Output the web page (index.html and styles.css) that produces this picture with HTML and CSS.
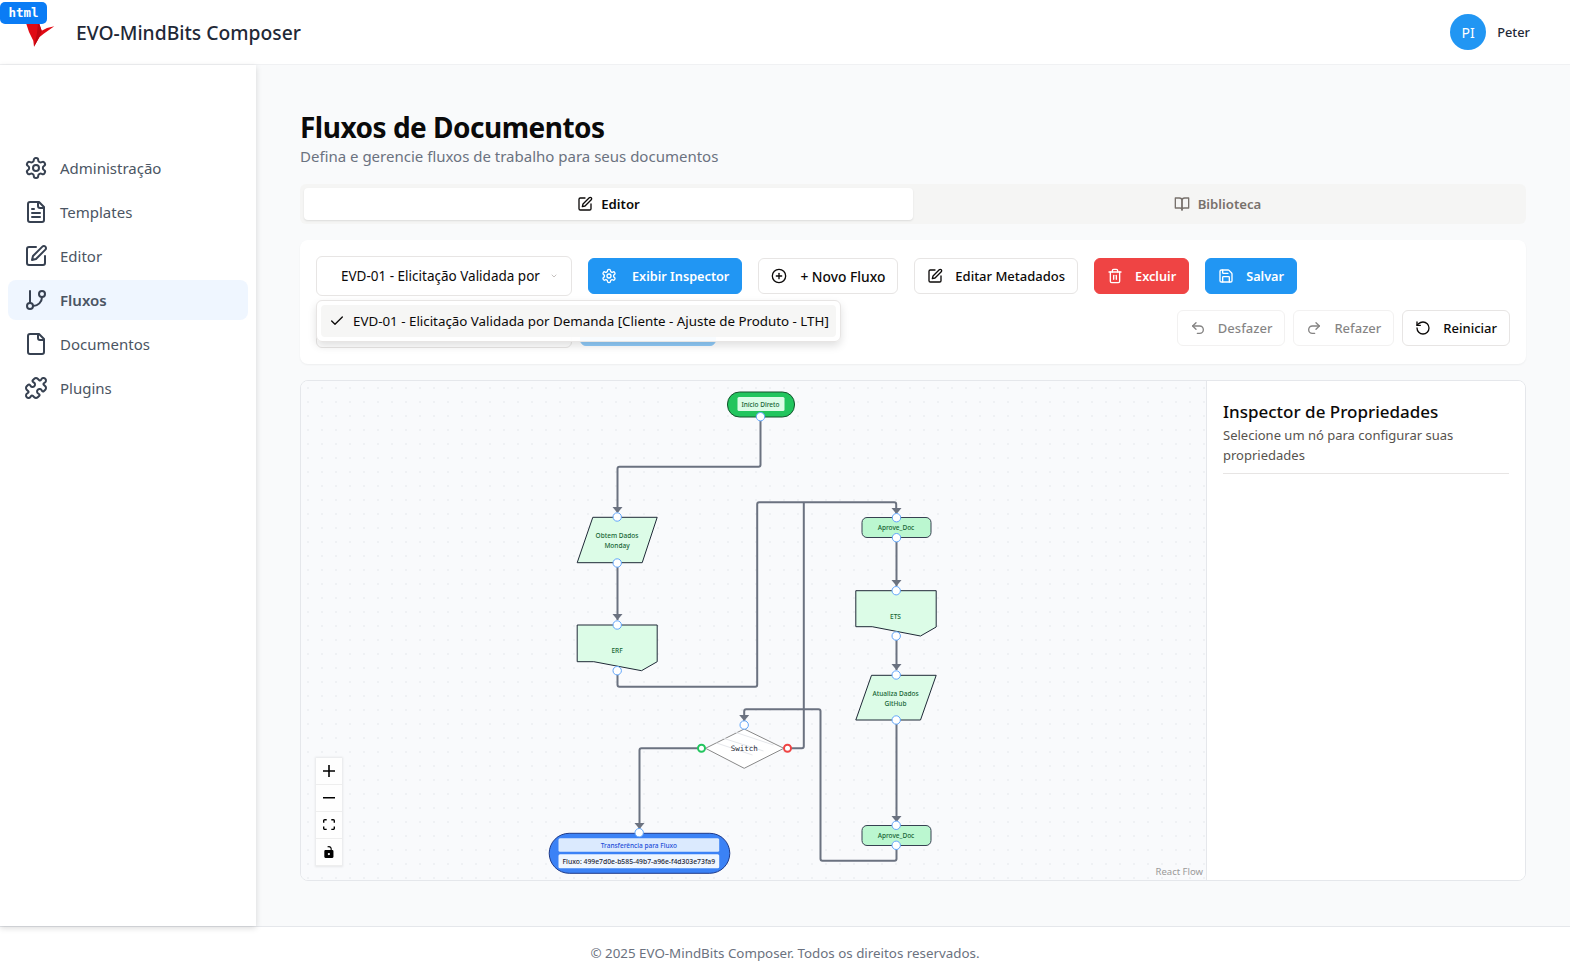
FILE: index.html
```html
<!DOCTYPE html>
<html lang="pt-BR">
<head>
    <meta charset="UTF-8">
    <title>EVO-MindBits Composer</title>
    <link rel="stylesheet" href="styles.css">
</head>
<body>
    <!-- icones -->
    <svg class="sprite">
        <symbol id="i-settings" viewBox="0 0 24 24"><path d="M12.22 2h-.44a2 2 0 0 0-2 2v.18a2 2 0 0 1-1 1.73l-.43.25a2 2 0 0 1-2 0l-.15-.08a2 2 0 0 0-2.73.73l-.22.38a2 2 0 0 0 .73 2.73l.15.1a2 2 0 0 1 1 1.72v.51a2 2 0 0 1-1 1.74l-.15.09a2 2 0 0 0-.73 2.73l.22.38a2 2 0 0 0 2.73.73l.15-.08a2 2 0 0 1 2 0l.43.25a2 2 0 0 1 1 1.73V20a2 2 0 0 0 2 2h.44a2 2 0 0 0 2-2v-.18a2 2 0 0 1 1-1.73l.43-.25a2 2 0 0 1 2 0l.15.08a2 2 0 0 0 2.73-.73l.22-.39a2 2 0 0 0-.73-2.73l-.15-.08a2 2 0 0 1-1-1.74v-.5a2 2 0 0 1 1-1.74l.15-.09a2 2 0 0 0 .73-2.73l-.22-.38a2 2 0 0 0-2.73-.73l-.15.08a2 2 0 0 1-2 0l-.43-.25a2 2 0 0 1-1-1.73V4a2 2 0 0 0-2-2z"/><circle cx="12" cy="12" r="3"/></symbol>
        <symbol id="i-file-text" viewBox="0 0 24 24"><path d="M15 2H6a2 2 0 0 0-2 2v16a2 2 0 0 0 2 2h12a2 2 0 0 0 2-2V7Z"/><path d="M14 2v4a2 2 0 0 0 2 2h4"/><path d="M10 9H8"/><path d="M16 13H8"/><path d="M16 17H8"/></symbol>
        <symbol id="i-pen" viewBox="0 0 24 24"><path d="M12 3H5a2 2 0 0 0-2 2v14a2 2 0 0 0 2 2h14a2 2 0 0 0 2-2v-7"/><path d="M18.375 2.625a2.121 2.121 0 1 1 3 3L12 15l-4 1 1-4Z"/></symbol>
        <symbol id="i-branch" viewBox="0 0 24 24"><path d="M6 3v12"/><circle cx="18" cy="6" r="3"/><circle cx="6" cy="18" r="3"/><path d="M18 9a9 9 0 0 1-9 9"/></symbol>
        <symbol id="i-file" viewBox="0 0 24 24"><path d="M15 2H6a2 2 0 0 0-2 2v16a2 2 0 0 0 2 2h12a2 2 0 0 0 2-2V7Z"/><path d="M14 2v4a2 2 0 0 0 2 2h4"/></symbol>
        <symbol id="i-puzzle" viewBox="0 0 24 24"><path d="M19.439 7.85c-.049.322.059.648.289.878l1.568 1.568c.47.47.706 1.087.706 1.704s-.235 1.233-.706 1.704l-1.611 1.611a.98.98 0 0 1-.837.276c-.47-.07-.802-.48-.968-.925a2.501 2.501 0 1 0-3.214 3.214c.446.166.855.497.925.968a.979.979 0 0 1-.276.837l-1.61 1.61a2.404 2.404 0 0 1-1.705.707 2.402 2.402 0 0 1-1.704-.706l-1.568-1.568a1.026 1.026 0 0 0-.877-.29c-.493.074-.84.504-1.02.968a2.5 2.5 0 1 1-3.237-3.237c.464-.18.894-.527.967-1.02a1.026 1.026 0 0 0-.289-.877l-1.568-1.568A2.402 2.402 0 0 1 1.998 12c0-.617.236-1.234.706-1.704L4.23 8.77c.24-.24.581-.353.917-.303.515.077.877.528 1.073 1.01a2.5 2.5 0 1 0 3.259-3.259c-.482-.196-.933-.558-1.01-1.073-.05-.336.062-.676.303-.917l1.525-1.525A2.402 2.402 0 0 1 12 1.998c.617 0 1.234.236 1.704.706l1.568 1.568c.23.23.556.338.877.29.493-.074.84-.504 1.02-.968a2.5 2.5 0 1 1 3.237 3.237c-.464.18-.894.527-.967 1.02Z"/></symbol>
        <symbol id="i-book" viewBox="0 0 24 24"><path d="M2 3h6a4 4 0 0 1 4 4v14a3 3 0 0 0-3-3H2z"/><path d="M22 3h-6a4 4 0 0 0-4 4v14a3 3 0 0 1 3-3h7z"/></symbol>
        <symbol id="i-plus" viewBox="0 0 24 24"><circle cx="12" cy="12" r="10"/><path d="M8 12h8"/><path d="M12 8v8"/></symbol>
        <symbol id="i-trash" viewBox="0 0 24 24"><path d="M3 6h18"/><path d="M19 6v14c0 1-1 2-2 2H7c-1 0-2-1-2-2V6"/><path d="M8 6V4c0-1 1-2 2-2h4c1 0 2 1 2 2v2"/><path d="M10 11v6"/><path d="M14 11v6"/></symbol>
        <symbol id="i-save" viewBox="0 0 24 24"><path d="M15.2 3a2 2 0 0 1 1.4.6l3.8 3.8a2 2 0 0 1 .6 1.4V19a2 2 0 0 1-2 2H5a2 2 0 0 1-2-2V5a2 2 0 0 1 2-2z"/><path d="M17 21v-7a1 1 0 0 0-1-1H8a1 1 0 0 0-1 1v7"/><path d="M7 3v4a1 1 0 0 0 1 1h7"/></symbol>
        <symbol id="i-undo" viewBox="0 0 24 24"><path d="M9 14 4 9l5-5"/><path d="M4 9h10.5a5.5 5.5 0 0 1 5.5 5.5a5.5 5.5 0 0 1-5.5 5.5H11"/></symbol>
        <symbol id="i-redo" viewBox="0 0 24 24"><path d="m15 14 5-5-5-5"/><path d="M20 9H9.5A5.5 5.5 0 0 0 4 14.5A5.5 5.5 0 0 0 9.5 20H13"/></symbol>
        <symbol id="i-reset" viewBox="0 0 24 24"><path d="M3 12a9 9 0 1 0 9-9 9.75 9.75 0 0 0-6.74 2.74L3 8"/><path d="M3 3v5h5"/></symbol>
        <symbol id="i-check" viewBox="0 0 24 24"><path d="M20 6 9 17l-5-5"/></symbol>
        <symbol id="i-chevron" viewBox="0 0 24 24"><path d="m6 9 6 6 6-6"/></symbol>
    </svg>

    <span class="lang-badge">html</span>

    <header class="topbar">
        <div class="brand">
            <svg class="brand-logo" viewBox="0 0 32 30">
                <polygon points="2,4 5,13 9.300,21.700 10,27.700 15.300,18.300 20,14.500 30.300,7.300 23,9 17.700,11.700 14.300,2" fill="#e00a14"/>
                <polygon points="14.300,2 17.700,11.700 15.300,18.300 10,27.700 13,14" fill="#c00610"/>
            </svg>
            <span class="brand-name">EVO-MindBits Composer</span>
        </div>
        <div class="user">
            <span class="avatar">PI</span>
            <span class="user-name">Peter</span>
        </div>
    </header>

    <div class="page">
        <nav class="sidebar">
            <a class="nav-item"><svg class="icon"><use href="#i-settings"/></svg>Administração</a>
            <a class="nav-item"><svg class="icon"><use href="#i-file-text"/></svg>Templates</a>
            <a class="nav-item"><svg class="icon"><use href="#i-pen"/></svg>Editor</a>
            <a class="nav-item active"><svg class="icon"><use href="#i-branch"/></svg>Fluxos</a>
            <a class="nav-item"><svg class="icon"><use href="#i-file"/></svg>Documentos</a>
            <a class="nav-item"><svg class="icon"><use href="#i-puzzle"/></svg>Plugins</a>
        </nav>

        <main class="content">
            <h1 class="title">Fluxos de Documentos</h1>
            <p class="subtitle">Defina e gerencie fluxos de trabalho para seus documentos</p>

            <div class="tabs">
                <div class="tab active"><svg class="icon-sm"><use href="#i-pen"/></svg>Editor</div>
                <div class="tab"><svg class="icon-sm"><use href="#i-book"/></svg>Biblioteca</div>
            </div>

            <section class="toolbar">
                <div class="toolbar-row">
                    <div class="select">
                        <span class="select-text">EVD-01 - Elicitação Validada por</span>
                        <svg class="chevron"><use href="#i-chevron"/></svg>
                    </div>
                    <button class="btn btn-blue btn-wide"><svg class="icon-sm"><use href="#i-settings"/></svg>Exibir Inspector</button>
                    <button class="btn btn-new"><svg class="icon-sm"><use href="#i-plus"/></svg>+ Novo Fluxo</button>
                    <button class="btn"><svg class="icon-sm"><use href="#i-pen"/></svg>Editar Metadados</button>
                    <button class="btn btn-red"><svg class="icon-sm"><use href="#i-trash"/></svg>Excluir</button>
                    <button class="btn btn-blue"><svg class="icon-sm"><use href="#i-save"/></svg>Salvar</button>
                </div>
                <div class="toolbar-row row-second">
                    <div class="select select-muted">
                        <span class="select-text">Selecione um nó</span>
                    </div>
                    <button class="btn btn-blue btn-off btn-link">Criar Conexão</button>
                    <div class="history">
                        <button class="btn btn-off"><svg class="icon-sm"><use href="#i-undo"/></svg>Desfazer</button>
                        <button class="btn btn-off"><svg class="icon-sm"><use href="#i-redo"/></svg>Refazer</button>
                        <button class="btn"><svg class="icon-sm"><use href="#i-reset"/></svg>Reiniciar</button>
                    </div>
                </div>
                <!-- lista aberta do select -->
                <div class="dropdown">
                    <div class="dropdown-item"><svg class="icon-sm"><use href="#i-check"/></svg>EVD-01 - Elicitação Validada por Demanda [Cliente - Ajuste de Produto - LTH]</div>
                </div>
            </section>

            <section class="builder">
                <div class="flow">
                    <svg class="flow-graph" viewBox="300.500 381 905 499">
                        <g class="edges">
                            <path d="M760 417V464.700q0 2 -2 2H619q-2 0 -2 2V512"/>
                            <path d="M617 563V620"/>
                            <path d="M617 671V684.700q0 2 2 2H754.700q2 0 2 -2V504.300q0 -2 2 -2H893.700q2 0 2 2V513"/>
                            <path d="M787 748.300H801.300q2 0 2 -2V502.300"/>
                            <path d="M896 538V586"/>
                            <path d="M896 636V670"/>
                            <path d="M896 720V822"/>
                            <path d="M896 845V858.700q0 2 -2 2H822q-2 0 -2 -2V711.300q0 -2 -2 -2H745.700q-2 0 -2 2V721"/>
                            <path d="M701 748.300H641q-2 0 -2 2V829"/>
                        </g>
                        <g class="arrows">
                            <polygon points="612,507 622,507 617,513"/>
                            <polygon points="612,614 622,614 617,620"/>
                            <polygon points="891,508 901,508 896,514"/>
                            <polygon points="891,580 901,580 896,586"/>
                            <polygon points="891,664 901,664 896,670"/>
                            <polygon points="891,816 901,816 896,822"/>
                            <polygon points="738.700,715 748.700,715 743.700,721"/>
                            <polygon points="634,823 644,823 639,829"/>
                        </g>

                        <rect class="node-start" x="727" y="392" width="67" height="25" rx="12"/>
                        <rect x="737" y="397" width="47" height="14" rx="1.500" fill="#dcfce7"/>
                        <text class="label-green" x="760" y="404.500">Início Direto</text>

                        <polygon class="node-doc" points="592.300,517.300 656.700,517.300 641.700,562.700 576.700,562.700"/>
                        <text class="label-green" x="616.500" y="535.500">Obtem Dados</text>
                        <text class="label-green" x="616.500" y="545.500">Monday</text>

                        <path class="node-doc" d="M576.700 625H656.700V661.700L641 670.700 593.300 661.700H576.700Z"/>
                        <text class="label-green" x="616.500" y="650">ERF</text>

                        <rect class="node-step" x="861.500" y="517.500" width="69" height="20" rx="5"/>
                        <text class="label-green" x="895.500" y="527">Aprove_Doc</text>

                        <path class="node-doc" d="M855.300 590.700H935.700V627L920 636 871.700 626.700H855.300Z"/>
                        <text class="label-green" x="895" y="616">ETS</text>

                        <polygon class="node-doc" points="871,675.300 935.700,675.300 920,720 855.300,720"/>
                        <text class="label-green" x="895" y="693.500">Atualiza Dados</text>
                        <text class="label-green" x="895" y="703.500">GitHub</text>

                        <rect class="node-step" x="861.500" y="825.500" width="69" height="20" rx="5"/>
                        <text class="label-green" x="895.500" y="835">Aprove_Doc</text>

                        <polygon class="node-switch" points="743.700,729 783.300,748.300 743.700,768.300 705,748.300"/>
                        <g class="switch-lines">
                            <path d="M722 738L763 751M716 743L752 755M734 732L773 745"/>
                        </g>
                        <text class="label-mono" x="743.700" y="748.500">Switch</text>

                        <rect class="node-end" x="548.700" y="833.300" width="180.600" height="40" rx="20"/>
                        <rect x="558" y="838.300" width="160.700" height="13.400" rx="1.500" fill="#dbeafe"/>
                        <text class="label-blue" x="638.300" y="845.200">Transferência para Fluxo</text>
                        <rect x="558" y="854.300" width="160.700" height="14" rx="1.500" fill="#eff6ff"/>
                        <text class="label-dark" x="638.300" y="861.400">Fluxo: 499e7d0e-b585-49b7-a96e-f4d303e73fa9</text>

                        <g class="handles">
                            <circle cx="760" cy="416.700" r="4.200"/>
                            <circle cx="616.700" cy="517" r="4.200"/>
                            <circle cx="616.700" cy="563" r="4.200"/>
                            <circle cx="616.700" cy="625" r="4.200"/>
                            <circle cx="616.700" cy="670.700" r="4.200"/>
                            <circle cx="896" cy="517.700" r="4.200"/>
                            <circle cx="896" cy="537.700" r="4.200"/>
                            <circle cx="895.700" cy="590.700" r="4.200"/>
                            <circle cx="895.700" cy="636" r="4.200"/>
                            <circle cx="895.700" cy="675" r="4.200"/>
                            <circle cx="895.700" cy="720" r="4.200"/>
                            <circle cx="895.700" cy="825.300" r="4.200"/>
                            <circle cx="895.700" cy="845.300" r="4.200"/>
                            <circle cx="743.700" cy="725" r="4.200"/>
                            <circle cx="638.700" cy="832.700" r="4.200"/>
                        </g>
                        <circle class="handle-yes" cx="701" cy="748.300" r="3.500"/>
                        <circle class="handle-no" cx="787" cy="748.300" r="3.500"/>
                    </svg>

                    <div class="flow-controls">
                        <button class="flow-btn"><svg viewBox="0 0 32 32"><path d="M32 18.133H18.133V32h-4.266V18.133H0v-4.266h13.867V0h4.266v13.867H32z"/></svg></button>
                        <button class="flow-btn"><svg viewBox="0 0 32 5"><path d="M0 0h32v4.200H0z"/></svg></button>
                        <button class="flow-btn"><svg viewBox="0 0 32 30"><path d="M3.692 4.630c0-.530.400-.938.939-.938h5.215V0H4.708C2.130 0 0 2.054 0 4.630v5.216h3.692V4.631zM27.354 0h-5.200v3.692h5.170c.530 0 .984.400.984.939v5.215H32V4.631A4.624 4.624 0 0027.354 0zm.954 24.830c0 .532-.400.940-.939.940h-5.215v3.768h5.215c2.577 0 4.631-2.130 4.631-4.707v-5.139h-3.692v5.139zm-23.677.940c-.531 0-.939-.400-.939-.940v-5.138H0v5.139c0 2.577 2.130 4.707 4.708 4.707h5.138V25.770H4.631z"/></svg></button>
                        <button class="flow-btn"><svg viewBox="0 0 25 32"><path d="M21.333 10.667H19.810V7.619C19.810 3.429 16.380 0 12.190 0 10.600 0 9.100.500 7.900 1.400l1.800 2.400c.700-.500 1.600-.800 2.500-.800 2.500 0 4.572 2.100 4.572 4.619v3.048H3.048A3.056 3.056 0 000 13.714v15.238A3.056 3.056 0 003.048 32h18.285a3.056 3.056 0 003.048-3.048V13.714a3.056 3.056 0 00-3.048-3.047zM12.190 24.533a3.056 3.056 0 01-3.047-3.047 3.056 3.056 0 013.047-3.048 3.056 3.056 0 013.048 3.048 3.056 3.056 0 01-3.048 3.047z"/></svg></button>
                    </div>
                    <span class="flow-credit">React Flow</span>
                </div>

                <aside class="inspector">
                    <h2 class="inspector-title">Inspector de Propriedades</h2>
                    <p class="inspector-text">Selecione um nó para configurar suas propriedades</p>
                </aside>
            </section>
        </main>
    </div>

    <footer class="footer">© 2025 EVO-MindBits Composer. Todos os direitos reservados.</footer>
</body>
</html>
```

FILE: styles.css
```css
*{
    margin: 0;
    padding: 0;
    box-sizing: border-box;
}
body{
    height: 100vh;
    display: flex;
    flex-direction: column;
    overflow: hidden;
    background-color: #fff;
    color: #1f2937;
    font-family: "Noto Sans", "Open Sans", sans-serif;
    font-size: 13.200px;
}
.sprite{
    display: none;
}
.icon, .icon-sm, .chevron{
    fill: none;
    stroke: currentColor;
    stroke-width: 2;
    stroke-linecap: round;
    stroke-linejoin: round;
    flex: none;
}
.icon{
    width: 24px;
    height: 24px;
    color: #374151;
}
.icon-sm{
    width: 16px;
    height: 16px;
}

/* etiqueta do bloco de codigo */
.lang-badge{
    position: absolute;
    left: 0;
    top: 2px;
    z-index: 5;
    width: 47px;
    height: 22px;
    border-radius: 5px;
    background-color: #0a7cf5;
    color: #fff;
    font-family: "DejaVu Sans Mono", monospace;
    font-size: 12.500px;
    font-weight: 700;
    line-height: 22px;
    text-align: center;
}

/* topo */
.topbar{
    height: 65px;
    flex: none;
    display: flex;
    align-items: center;
    justify-content: space-between;
    padding: 0 40px 0 24px;
    border-bottom: 1px solid #f0f1f3;
}
.brand{
    display: flex;
    align-items: center;
    gap: 20px;
}
.brand-logo{
    width: 32px;
    height: 30px;
    margin-top: 4px;
}
.brand-name{
    font-size: 19.300px;
    font-weight: 500;
    color: #1f2937;
}
.user{
    display: flex;
    align-items: center;
    gap: 11px;
}
.avatar{
    width: 36px;
    height: 36px;
    border-radius: 50%;
    display: flex;
    align-items: center;
    justify-content: center;
    background-color: #2196f3;
    color: #fff;
    font-size: 14px;
}
.user-name{
    font-size: 12.800px;
    font-weight: 500;
}

/* corpo */
.page{
    flex: 1;
    min-height: 0;
    display: flex;
}
.sidebar{
    width: 256px;
    flex: none;
    padding: 83px 8px 0;
    display: flex;
    flex-direction: column;
    gap: 4px;
    background-color: #fff;
    box-shadow: 0 2px 6px rgba(0,0,0,.15);
    position: relative;
}
.nav-item{
    height: 40px;
    display: flex;
    align-items: center;
    gap: 12px;
    padding-left: 16px;
    border-radius: 8px;
    font-size: 15px;
    color: #4b5563;
}
.nav-item.active{
    background-color: #eff6ff;
    font-weight: 600;
}
.content{
    flex: 1;
    min-width: 0;
    padding: 44px 44px 0;
    background-color: #f9fafb;
}
.title{
    font-size: 28px;
    line-height: 36px;
    font-weight: 700;
    color: #0a0a0a;
    letter-spacing: -.5px;
}
.subtitle{
    font-size: 15px;
    line-height: 22px;
    color: #6b7280;
}

/* abas */
.tabs{
    margin-top: 17px;
    height: 40px;
    padding: 4px;
    display: grid;
    grid-template-columns: 1fr 1fr;
    border-radius: 6px;
    background-color: #f5f5f4;
}
.tab{
    display: flex;
    align-items: center;
    justify-content: center;
    gap: 8px;
    border-radius: 4px;
    font-size: 13.200px;
    font-weight: 600;
    color: #78716c;
}
.tab.active{
    background-color: #fff;
    color: #0c0a09;
    box-shadow: 0 1px 2px rgba(0,0,0,.1);
}

/* barra de ferramentas */
.toolbar{
    position: relative;
    margin-top: 16px;
    height: 124px;
    padding: 16px;
    display: flex;
    flex-direction: column;
    gap: 12px;
    border-radius: 8px;
    background-color: #fff;
    box-shadow: 0 1px 2px rgba(0,0,0,.05);
}
.toolbar-row{
    height: 40px;
    display: flex;
    align-items: center;
    gap: 16px;
}
.row-second{
    gap: 8px;
}
.select{
    width: 256px;
    height: 40px;
    flex: none;
    display: flex;
    align-items: center;
    justify-content: space-between;
    padding: 0 13px 0 24px;
    border: 1px solid #e7e5e4;
    border-radius: 6px;
    background-color: #fff;
    color: #0c0a09;
    font-size: 13.500px;
}
.select-muted{
    color: #78716c;
}
.chevron{
    width: 8px;
    height: 8px;
    color: #a8a29e;
}
.btn{
    height: 36px;
    display: flex;
    align-items: center;
    justify-content: center;
    gap: 12px;
    padding: 0 12px;
    border: 1px solid #e7e5e4;
    border-radius: 6px;
    background-color: #fff;
    color: #0c0a09;
    font-family: inherit;
    font-size: 13px;
    font-weight: 500;
    white-space: nowrap;
}
.btn-blue{
    border-color: #2196f3;
    background-color: #2196f3;
    color: #fff;
    font-size: 12.700px;
    font-weight: 600;
}
.btn-red{
    border-color: #ef4444;
    background-color: #ef4444;
    color: #fff;
    font-size: 12.700px;
    font-weight: 600;
}
.btn-wide{
    gap: 15px;
}
.btn-new{
    gap: 13px;
    font-size: 13.800px;
}
.btn-link{
    width: 136px;
}
.btn-off{
    opacity: .5;
}
.history{
    margin-left: auto;
    display: flex;
    gap: 8px;
}
.dropdown{
    position: absolute;
    left: 16px;
    top: 60px;
    width: 525px;
    height: 42px;
    padding: 4px;
    border: 1px solid #e7e5e4;
    border-radius: 6px;
    background-color: rgba(255,255,255,.94);
    box-shadow: 0 4px 8px rgba(0,0,0,.12);
}
.dropdown-item{
    height: 100%;
    display: flex;
    align-items: center;
    gap: 8px;
    padding: 0 0 1px 8px;
    border-radius: 4px;
    background-color: rgba(245,245,244,.94);
    color: #0c0a09;
    font-size: 13.350px;
    white-space: nowrap;
}

/* editor de fluxo */
.builder{
    margin-top: 16px;
    height: 501px;
    display: flex;
    border: 1px solid #e5e7eb;
    border-radius: 8px;
    background-color: #fff;
    overflow: hidden;
}
.flow{
    position: relative;
    flex: 1;
    min-width: 0;
    background-color: #f9fafc;
    background-image: radial-gradient(#eff1f4 1px, transparent 1px);
    background-size: 14px 14px;
}
.flow-graph{
    display: block;
    width: 100%;
    height: 100%;
}
.edges path{
    fill: none;
    stroke: #6b7280;
    stroke-width: 2;
}
.arrows polygon{
    fill: #6b7280;
}
.handles circle{
    fill: #fff;
    stroke: #60a5fa;
    stroke-width: 1;
}
.handle-yes, .handle-no{
    fill: #fff;
    stroke-width: 2;
}
.handle-yes{
    stroke: #22c55e;
}
.handle-no{
    stroke: #ef4444;
}
.node-start{
    fill: #22c55e;
    stroke: #14532d;
    stroke-width: 1;
}
.node-doc{
    fill: #dcfce7;
    stroke: #1f2937;
    stroke-width: 1;
}
.node-step{
    fill: #bbf7d0;
    stroke: #374151;
    stroke-width: 1;
}
.node-switch{
    fill: #fff;
    stroke: #888;
    stroke-width: 1;
}
.switch-lines path{
    fill: none;
    stroke: #e5e7eb;
    stroke-width: 1;
}
.node-end{
    fill: #3b82f6;
    stroke: #1e3a8a;
    stroke-width: 1;
}
.flow-graph text{
    font-size: 6.500px;
    text-anchor: middle;
    dominant-baseline: central;
}
.label-green{
    fill: #166534;
    font-weight: 500;
}
.label-blue{
    fill: #1d4ed8;
    font-weight: 500;
}
.flow-graph .label-dark{
    fill: #1f2937;
    font-size: 6.800px;
    font-weight: 500;
}
.flow-graph .label-mono{
    fill: #1f2937;
    font-family: "DejaVu Sans Mono", monospace;
    font-size: 7.500px;
}
.flow-controls{
    position: absolute;
    left: 15px;
    bottom: 14px;
    display: flex;
    flex-direction: column;
    box-shadow: 0 0 2px 1px rgba(0,0,0,.08);
}
.flow-btn{
    width: 26px;
    height: 27px;
    display: flex;
    align-items: center;
    justify-content: center;
    border: none;
    border-bottom: 1px solid #eee;
    background-color: #fefefe;
}
.flow-btn svg{
    width: 12px;
    max-height: 12px;
    fill: #000;
}
.flow-credit{
    position: absolute;
    right: 3px;
    bottom: 2px;
    font-size: 9.500px;
    color: #999;
}
.inspector{
    width: 319px;
    flex: none;
    padding: 20px 16px 0;
    border-left: 1px solid #e5e7eb;
    background-color: #fff;
}
.inspector-title{
    font-size: 17px;
    line-height: 22px;
    font-weight: 500;
    color: #0c0a09;
}
.inspector-text{
    margin-top: 2px;
    padding-bottom: 8px;
    border-bottom: 1px solid #e7e5e4;
    font-size: 13px;
    line-height: 20px;
    color: #57534e;
}

/* rodape */
.footer{
    height: 52px;
    flex: none;
    padding-top: 17px;
    border-top: 1px solid #e5e7eb;
    background-color: #fff;
    text-align: center;
    font-size: 13.350px;
    color: #6b7280;
}
```
